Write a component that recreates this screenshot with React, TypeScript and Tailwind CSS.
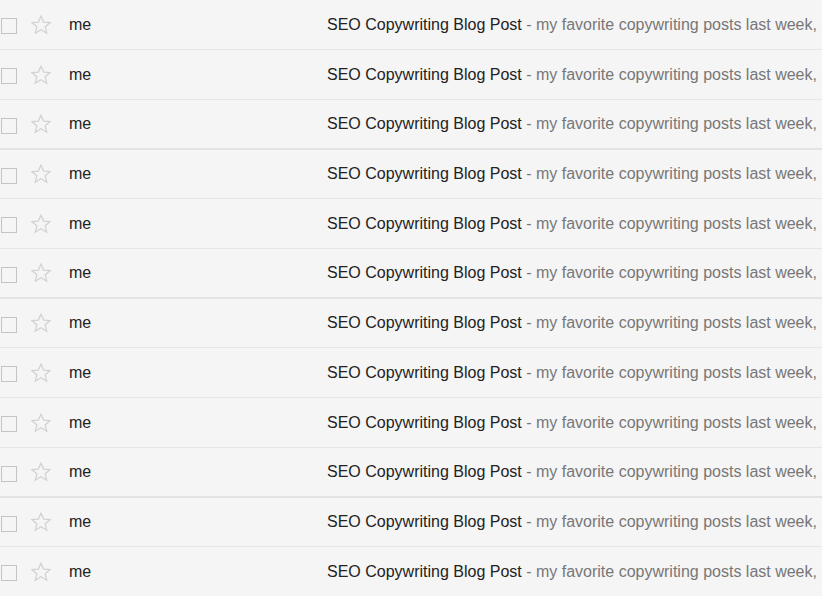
const rows = [
  { h: "h-[50px]", line: "border-b border-[#e6e6e6]" },
  { h: "h-[50px]", line: "border-b border-[#e6e6e6]" },
  { h: "h-[50px]", line: "border-b-2 border-[#e3e3e3]" },
  { h: "h-[49px]", line: "border-b border-[#e6e6e6]" },
  { h: "h-[50px]", line: "border-b border-[#e6e6e6]" },
  { h: "h-[50px]", line: "border-b-2 border-[#e3e3e3]" },
  { h: "h-[49px]", line: "border-b border-[#e6e6e6]" },
  { h: "h-[50px]", line: "border-b border-[#e6e6e6]" },
  { h: "h-[50px]", line: "border-b border-[#e6e6e6]" },
  { h: "h-[50px]", line: "border-b-2 border-[#e3e3e3]" },
  { h: "h-[49px]", line: "border-b border-[#e6e6e6]" },
  { h: "h-[49px]", line: "" },
];

function StarIcon() {
  return (
    <svg width="20" height="20" viewBox="0 0 20 20" className="shrink-0">
      <polygon
        points="10,1.2 12.7,7.1 19.1,7.6 14.2,11.8 15.7,18.2 10,14.8 4.3,18.2 5.8,11.8 0.9,7.6 7.3,7.1"
        fill="none"
        stroke="#d2d2d2"
        strokeWidth="1.3"
      />
    </svg>
  );
}

function MailRow({ h, line }: { h: string; line: string }) {
  return (
    <div className={`flex items-center ${h} ${line}`}>
      <div className="ml-px mt-[3px] h-[16px] w-[16px] shrink-0 border border-[#c4c4c4]" />
      <div className="ml-[14px]">
        <StarIcon />
      </div>
      <div className="ml-[18px] w-[258px] shrink-0 text-[#222]">me</div>
      <div className="min-w-0 flex-1 overflow-hidden whitespace-nowrap">
        <span className="text-[#222]">SEO Copywriting Blog Post</span>
        <span className="text-[#777]"> - my favorite copywriting posts last week, I found some great reads</span>
      </div>
    </div>
  );
}

export default function App() {
  return (
    <div className="h-[596px] w-[822px] overflow-hidden bg-[#f5f5f5] font-['Liberation_Sans',Arial,sans-serif] text-[16px]">
      {rows.map((r, i) => (
        <MailRow key={i} h={r.h} line={r.line} />
      ))}
    </div>
  );
}
